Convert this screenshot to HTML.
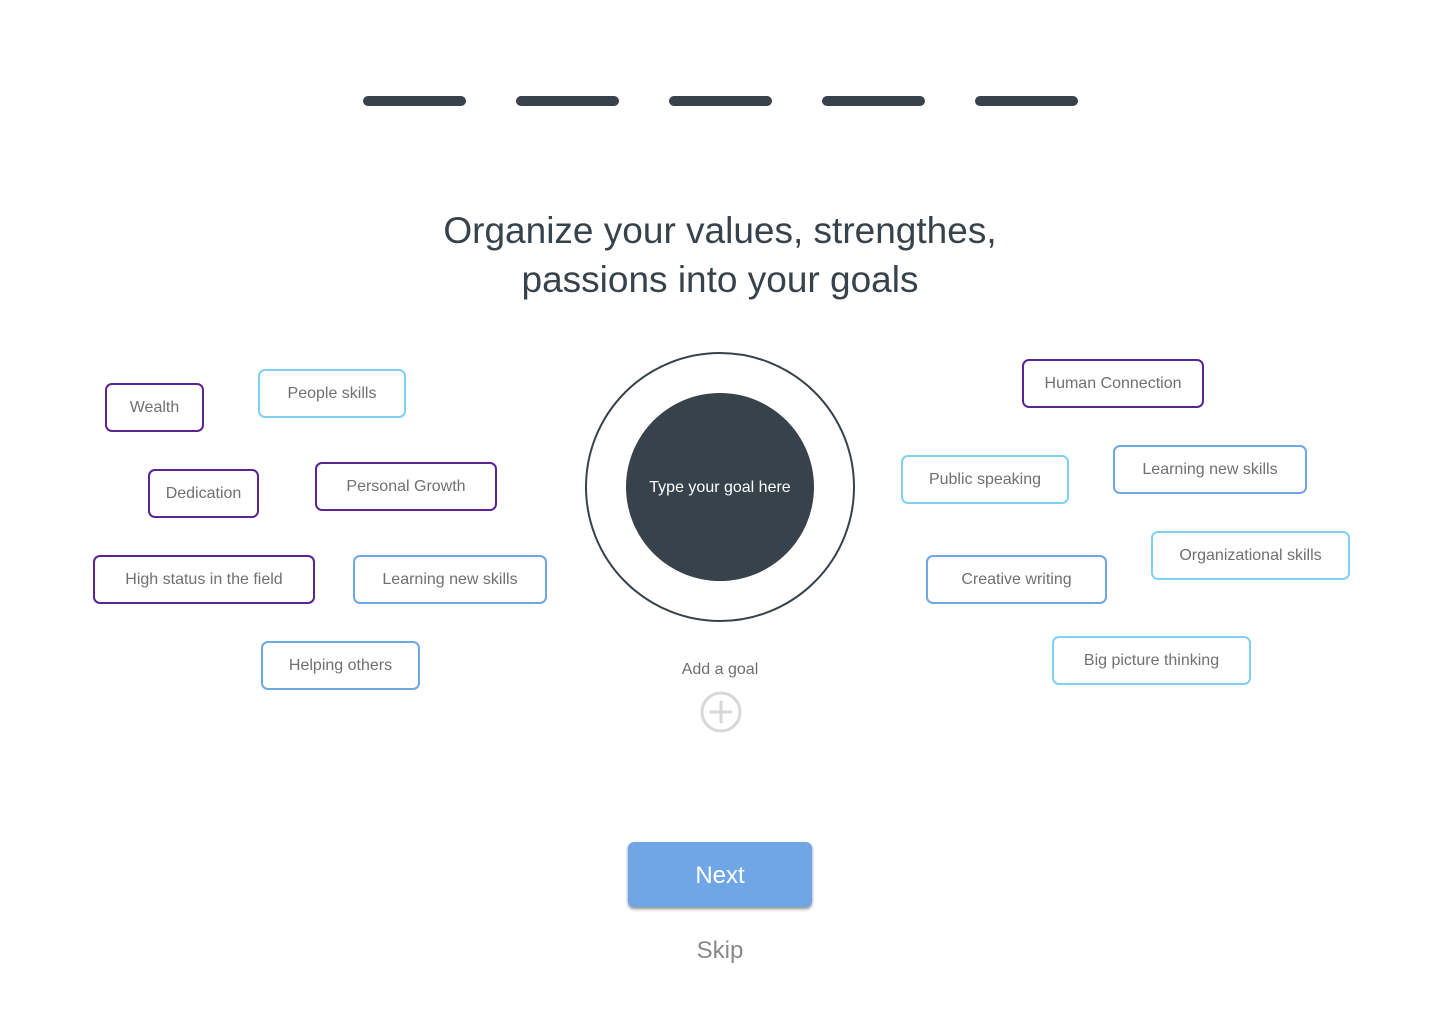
<!DOCTYPE html>
<html><head><meta charset="utf-8"><style>
html,body{margin:0;padding:0;background:#fff;width:1440px;height:1024px;overflow:hidden;font-family:"Liberation Sans",sans-serif;}
.bar{position:absolute;top:96px;width:103px;height:10px;border-radius:5px;background:#37424a;}
.t{position:absolute;left:0;width:1440px;text-align:center;color:#37424a;font-size:37px;line-height:49px;}
.b{position:absolute;box-sizing:border-box;height:49px;border:2px solid;border-radius:7px;color:#707070;font-size:16px;display:flex;align-items:center;justify-content:center;background:#fff;}
.p{border-color:#5b2393}.l{border-color:#80d1f1}.m{border-color:#6fa6e6}
</style></head><body>
<div class="bar" style="left:363px"></div>
<div class="bar" style="left:516px"></div>
<div class="bar" style="left:669px"></div>
<div class="bar" style="left:822px"></div>
<div class="bar" style="left:975px"></div>
<div class="t" style="top:206px">Organize your values, strengthes,<br>passions into your goals</div>

<div class="b p" style="left:105px;top:383px;width:99px">Wealth</div>
<div class="b l" style="left:258px;top:369px;width:148px">People skills</div>
<div class="b p" style="left:148px;top:469px;width:111px">Dedication</div>
<div class="b p" style="left:315px;top:462px;width:182px">Personal Growth</div>
<div class="b p" style="left:93px;top:555px;width:222px">High status in the field</div>
<div class="b m" style="left:353px;top:555px;width:194px">Learning new skills</div>
<div class="b m" style="left:261px;top:641px;width:159px">Helping others</div>

<div class="b p" style="left:1022px;top:359px;width:182px">Human Connection</div>
<div class="b l" style="left:901px;top:455px;width:168px">Public speaking</div>
<div class="b m" style="left:1113px;top:445px;width:194px">Learning new skills</div>
<div class="b m" style="left:926px;top:555px;width:181px">Creative writing</div>
<div class="b l" style="left:1151px;top:531px;width:199px">Organizational skills</div>
<div class="b l" style="left:1052px;top:636px;width:199px">Big picture thinking</div>

<svg style="position:absolute;left:580px;top:347px" width="280" height="280">
<circle cx="140" cy="140" r="134" fill="none" stroke="#37424a" stroke-width="2"/>
<circle cx="140" cy="140" r="94" fill="#37424a"/>
<text x="140" y="145" text-anchor="middle" fill="#fff" font-family="Liberation Sans, sans-serif" font-size="16">Type your goal here</text>
</svg>
<div style="position:absolute;left:0;width:1440px;top:661px;text-align:center;color:#707070;font-size:16px">Add a goal</div>
<svg style="position:absolute;left:699px;top:690px" width="44" height="44">
<circle cx="22" cy="22" r="19" fill="none" stroke="#d8d8d8" stroke-width="3"/>
<path d="M22 12V32M12 22H32" stroke="#d8d8d8" stroke-width="3" stroke-linecap="round"/>
</svg>
<div style="position:absolute;left:628px;top:842px;width:184px;height:65px;border-radius:6px;background:#6fa6e6;box-shadow:0 2px 3px rgba(0,0,0,.45);color:#fff;font-size:24px;display:flex;align-items:center;justify-content:center"><span style="position:relative;top:1px">Next</span></div>
<div style="position:absolute;left:0;width:1440px;top:937px;text-align:center;color:#8a8a8a;font-size:24px">Skip</div>
</body></html>
